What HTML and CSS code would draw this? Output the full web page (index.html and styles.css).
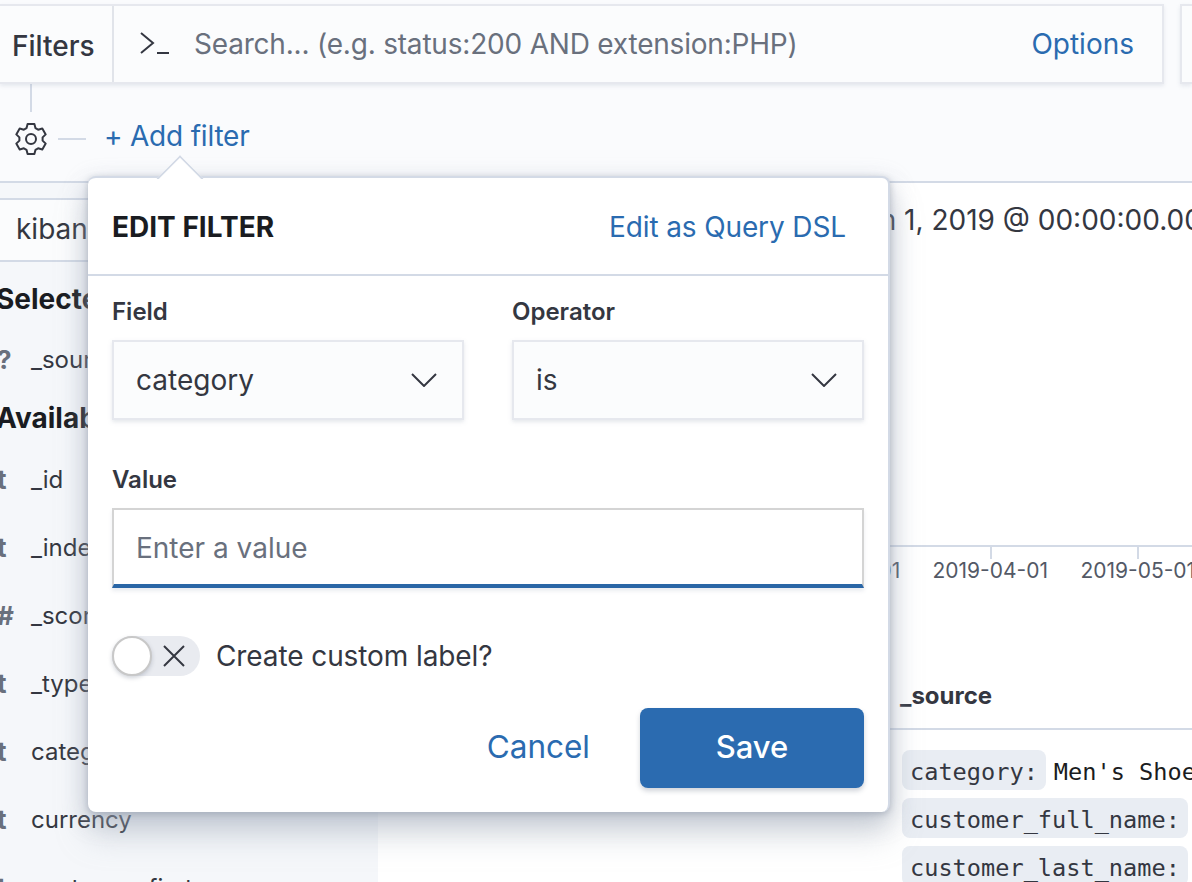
FILE: index.html
```html
<!DOCTYPE html>
<html>
<head>
  <meta charset="UTF-8">
  <title>Discover - Edit filter</title>
  <link rel="stylesheet" href="styles.css">
</head>
<body>
  <div class="page">
    <div class="topbar">
      <div class="querybar">
        <div class="filters-label">Filters</div>
        <svg class="prompt" width="30" height="24" viewBox="0 0 30 24"><path d="M1 1l12 10L1 21M17 21h12" fill="none" stroke="#343741" stroke-width="2"/></svg>
        <div class="search-text">Search... (e.g. status:200 AND extension:PHP)</div>
        <a class="options">Options</a>
      </div>
      <div class="datebox"></div>
    </div>

    <div class="filterbar">
      <div class="connector"></div>
      <div class="filterbar-row">
        <svg class="gear" width="34" height="34" viewBox="0 0 34 34"><path d="M13.6 2h6.8l1.1 4.2 2.6 1.5 4.2-1.2 3.4 5.9-3.1 3v3.200l3.100 3-3.400 5.900-4.200-1.200-2.600 1.500L20.400 32h-6.800l-1.100-4.200-2.600-1.500-4.200 1.200-3.400-5.900 3.100-3v-3.200l-3.100-3 3.400-5.900 4.200 1.200 2.600-1.500z" fill="none" stroke="#343741" stroke-width="2" stroke-linejoin="round"/><circle cx="17" cy="17" r="5" fill="none" stroke="#343741" stroke-width="2"/></svg>
        <div class="dash"></div>
        <a class="add-filter">+ Add filter</a>
      </div>
    </div>

    <div class="main">
      <aside class="sidebar">
        <div class="index-box">kibana_sample_data_ecommerce</div>
        <h3 class="side-title selected">Selected fields</h3>
        <div class="field field-first"><b>?</b><span>_source</span></div>
        <h3 class="side-title available">Available fields</h3>
        <div class="field"><b>t</b><span>_id</span></div>
        <div class="field"><b>t</b><span>_index</span></div>
        <div class="field"><b>#</b><span>_score</span></div>
        <div class="field"><b>t</b><span>_type</span></div>
        <div class="field"><b>t</b><span>category</span></div>
        <div class="field"><b>t</b><span>currency</span></div>
        <div class="field"><b>t</b><span>customer_first_name</span></div>
      </aside>
      <section class="content">
        <div class="daterange">Jan 1, 2019 @ 00:00:00.000 - Dec 31, 2019</div>
        <div class="axis">
          <div class="tick"><span>2019-03-01</span></div>
          <div class="tick"><span>2019-04-01</span></div>
          <div class="tick"><span>2019-05-01</span></div>
        </div>
        <div class="source-head">_source</div>
        <div class="source-rows">
          <div class="source-row"><code>category:</code><span>Men's Shoes</span></div>
          <div class="source-row"><code>customer_full_name:</code><span>Eddie</span></div>
          <div class="source-row"><code>customer_last_name:</code><span>Weber</span></div>
        </div>
      </section>
    </div>

    <div class="popover">
      <div class="arrow"></div>
      <div class="pop-head">
        <div class="pop-title">EDIT FILTER</div>
        <a class="pop-link">Edit as Query DSL</a>
      </div>
      <div class="pop-body">
        <div class="two-col">
          <div>
            <label>Field</label>
            <div class="select"><span>category</span><svg width="26" height="14" viewBox="0 0 26 14"><path d="M1 1l12 12L25 1" fill="none" stroke="#343741" stroke-width="2"/></svg></div>
          </div>
          <div>
            <label>Operator</label>
            <div class="select"><span>is</span><svg width="26" height="14" viewBox="0 0 26 14"><path d="M1 1l12 12L25 1" fill="none" stroke="#343741" stroke-width="2"/></svg></div>
          </div>
        </div>
        <label class="value-label">Value</label>
        <div class="value-input">Enter a value</div>
        <div class="switch-row">
          <div class="switch">
            <div class="knob"></div>
            <svg width="22" height="22" viewBox="0 0 22 22"><path d="M1 1l20 20M21 1L1 21" fill="none" stroke="#343741" stroke-width="2"/></svg>
          </div>
          <span class="switch-label">Create custom label?</span>
        </div>
        <div class="actions">
          <a class="cancel">Cancel</a>
          <button class="save">Save</button>
        </div>
      </div>
    </div>
  </div>
</body>
</html>
```

FILE: styles.css
```css
body {
  margin: 0;
  font-family: Inter, "Noto Sans", sans-serif;
  color: #343741;
  background: #fafbfd;
}
a {
  color: #2a6bb0;
}
.page {
  position: relative;
  width: 1192px;
  height: 882px;
  overflow: hidden;
}

/* top query bar */
.topbar {
  display: flex;
  gap: 16px;
  padding-top: 4px;
  height: 80px;
}
.querybar {
  flex: 0 0 1164px;
  box-sizing: border-box;
  height: 80px;
  display: flex;
  align-items: center;
  background: #fbfcfd;
  border: 2px solid #e6e8ee;
  border-left: none;
  box-shadow: 0 2px 4px rgba(152,162,179,.2);
}
.filters-label {
  width: 114px;
  box-sizing: border-box;
  height: 100%;
  padding: 22px 0 0 12px;
  font-size: 28px;
  font-weight: 500;
  line-height: 36px;
  border-right: 2px solid #e1e4ea;
}
.prompt {
  margin: 0 2px 0 26px;
}
.search-text {
  margin: 0 0 0 22px;
  font-size: 28px;
  letter-spacing: -0.2px;
  color: #69707d;
  flex: 1;
}
.options {
  margin: 0 28px 0 0;
  font-size: 28px;
}
.datebox {
  flex: 1;
  height: 80px;
  box-sizing: border-box;
  background: #fbfcfd;
  border: 2px solid #e6e8ee;
  border-right: none;
  box-shadow: 0 2px 4px rgba(152,162,179,.2);
}

/* filter row */
.filterbar {
  height: 97px;
}
.connector {
  width: 2px;
  height: 28px;
  margin-left: 30px;
  background: #d3dae6;
}
.filterbar-row {
  display: flex;
  align-items: center;
  height: 48px;
  padding: 3px 0 0 14px;
}
.dash {
  width: 28px;
  height: 2px;
  margin: -1px 0 0 10px;
  background: #d3dae6;
}
.add-filter {
  margin: -7px 0 0 18px;
  font-size: 28px;
  letter-spacing: -0.2px;
}

/* background app */
.main {
  display: flex;
  height: 701px;
  border-top: 2px solid #d3dae6;
}
.sidebar {
  width: 378px;
  flex: none;
  background: #f5f7fa;
  padding-top: 15px;
}
.index-box {
  box-sizing: border-box;
  height: 64px;
  padding: 12px 0 0 16px;
  font-size: 28px;
  line-height: 34px;
  white-space: nowrap;
  border-top: 2px solid #d3dae6;
  border-bottom: 2px solid #d3dae6;
  background: #fbfcfd;
}
.side-title {
  margin: 0 0 0 -4px;
  font-size: 28px;
  font-weight: 700;
  line-height: 36px;
  color: #1a1c21;
}
.selected {
  margin-top: 19px;
}
.available {
  margin-top: 25px;
  margin-bottom: 29px;
}
.field {
  display: flex;
  height: 68px;
  font-size: 24px;
  line-height: 30px;
}
.field-first {
  height: auto;
  margin-top: 28px;
}
.field b {
  width: 31px;
  color: #69707d;
  font-size: 26px;
  margin-left: -3px;
  padding-right: 3px;
}
.content {
  flex: 1;
  background: #fff;
  min-width: 0;
  white-space: nowrap;
}
.daterange {
  height: 320px;
  padding: 20px 0 0 470px;
  box-sizing: border-box;
  font-size: 28px;
  line-height: 34px;
}
.axis {
  display: flex;
  height: 44px;
  margin-top: 42px;
  padding-left: 464px;
  border-top: 2px solid #d3dae6;
}
.tick {
  flex: 0 0 147.5px;
  height: 12px;
  position: relative;
  font-size: 21px;
  color: #535966;
}
.tick span {
  display: block;
  width: 147.5px;
  margin-left: -73px;
  padding-top: 10px;
  line-height: 28px;
  text-align: center;
}
.tick::before {
  content: "";
  display: block;
  position: absolute;
  top: 0;
  left: 0;
  width: 2px;
  height: 12px;
  background: #d3dae6;
}
.source-head {
  height: 74px;
  margin-top: 65px;
  box-sizing: border-box;
  padding: 25px 0 0 522px;
  font-size: 24px;
  font-weight: 700;
  line-height: 30px;
  border-bottom: 2px solid #d3dae6;
}
.source-rows {
  padding: 20px 0 0 524px;
}
.source-row {
  display: flex;
  gap: 8px;
  height: 48px;
  font-family: "DejaVu Sans Mono", "Liberation Mono", monospace;
  font-size: 23.6px;
  line-height: 40px;
  color: #1a1c21;
}
.source-row span {
  padding-top: 2px;
}
.source-row code {
  flex: none;
  box-sizing: border-box;
  font: inherit;
  padding: 2px 8px 0;
  height: 40px;
  border-radius: 8px;
  background: #e9edf3;
  color: #343741;
}

/* popover */
.popover {
  position: absolute;
  left: 88px;
  top: 176px;
  width: 802px;
  height: 636px;
  box-sizing: border-box;
  background: #fff;
  border-radius: 8px;
  border: 2px solid #d3dae6;
  border-bottom: none;
  border-left: none;
  box-shadow: 0 24px 32px rgba(152,162,179,.35), 0 8px 24px rgba(152,162,179,.45), 0 2px 6px rgba(100,110,130,.4);
}
.arrow {
  position: absolute;
  left: 75px;
  top: -16px;
  width: 34px;
  height: 34px;
  box-sizing: border-box;
  transform: rotate(45deg);
  background: #fff;
  border-top: 2px solid #d3dae6;
  border-left: 2px solid #d3dae6;
  clip-path: polygon(0 0, 100% 0, 0 100%);
}
.pop-head {
  display: flex;
  justify-content: space-between;
  align-items: center;
  box-sizing: border-box;
  height: 98px;
  padding: 2px 42px 0 24px;
  border-bottom: 2px solid #d3dae6;
}
.pop-title {
  font-size: 28px;
  font-weight: 700;
  color: #1a1c21;
}
.pop-link {
  font-size: 28px;
  letter-spacing: -0.12px;
}
.pop-body {
  padding: 20px 24px 0;
}
.two-col {
  display: grid;
  grid-template-columns: 352px 352px;
  gap: 48px;
}
label {
  display: block;
  height: 44px;
  font-size: 24px;
  font-weight: 600;
  line-height: 32px;
}
.select {
  display: flex;
  align-items: center;
  justify-content: space-between;
  box-sizing: border-box;
  height: 80px;
  padding: 0 25px 0 22px;
  font-size: 28px;
  background: #fbfcfd;
  border: 2px solid #e6e8ee;
  box-shadow: 0 2px 4px rgba(152,162,179,.25);
}
.value-label {
  margin-top: 44px;
}
.value-input {
  box-sizing: border-box;
  width: 752px;
  height: 80px;
  padding: 20px 22px 0;
  font-size: 28px;
  line-height: 36px;
  color: #69707d;
  border: 2px solid #d4d4d4;
  border-bottom: 4px solid #2a66a6;
  box-shadow: 0 3px 4px rgba(152,162,179,.2);
}
.switch-row {
  display: flex;
  align-items: center;
  gap: 16px;
  height: 40px;
  margin-top: 48px;
  font-size: 28px;
}
.switch-label {
  letter-spacing: -0.1px;
}
.switch {
  position: relative;
  display: flex;
  align-items: center;
  justify-content: flex-end;
  box-sizing: border-box;
  width: 88px;
  height: 40px;
  padding-right: 15px;
  background: #e9ebf0;
  border-radius: 20px;
}
.knob {
  position: absolute;
  left: 0;
  top: 0;
  box-sizing: border-box;
  width: 40px;
  height: 40px;
  background: #fff;
  border: 2px solid #c8c8c8;
  border-radius: 50%;
  box-shadow: 0 2px 4px rgba(100,110,130,.3);
}
.actions {
  display: flex;
  align-items: center;
  justify-content: flex-end;
  gap: 50px;
  margin-top: 32px;
}
.cancel {
  margin-top: -4px;
  font-size: 31.5px;
}
.save {
  width: 224px;
  height: 80px;
  padding-bottom: 4px;
  font-family: inherit;
  font-size: 31px;
  font-weight: 500;
  color: #fff;
  background: #2b6bb0;
  border: none;
  border-radius: 8px;
  box-shadow: 0 3px 5px rgba(100,110,130,.3);
}
```
